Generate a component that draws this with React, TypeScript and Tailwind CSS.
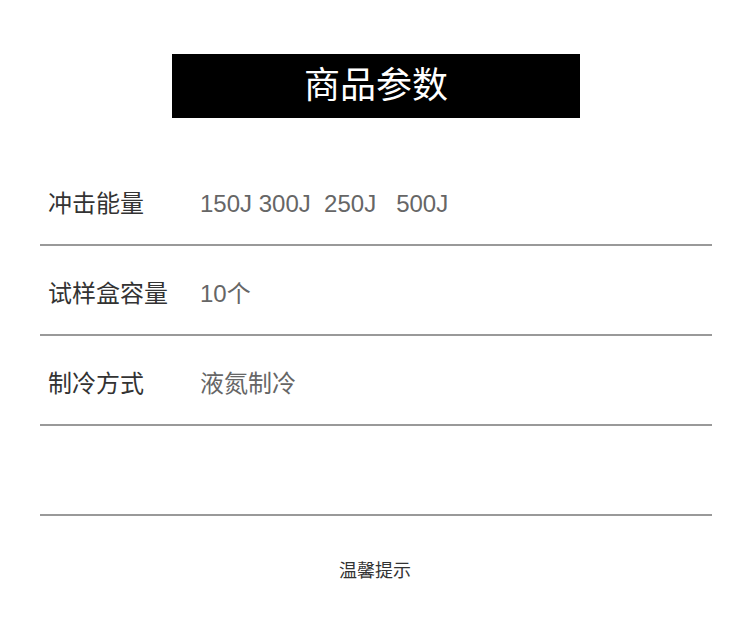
import React from 'react';

const rows = [
  { label: '冲击能量', value: '150J 300J\u00a0\u00a0250J\u00a0\u00a0\u00a0500J' },
  { label: '试样盒容量', value: '10个' },
  { label: '制冷方式', value: '液氮制冷' },
  { label: '', value: '' },
];

export default function App() {
  return (
    <div
      className="w-[750px] h-[630px] bg-white"
      style={{ fontFamily: '"Liberation Sans", "Noto Sans CJK SC", sans-serif' }}
    >
      {/* 标题 */}
      <div className="pt-[54px] pl-[172px]">
        <div className="w-[408px] h-[64px] bg-black flex items-center justify-center text-white text-[36px]">
          商品参数
        </div>
      </div>

      {/* 参数表 */}
      <div className="ml-[40px] w-[672px] mt-[38px]">
        {rows.map((row, i) => (
          <div key={i} className="h-[90px] flex items-center border-b-2 border-[#999] text-[24px] pt-[7px]">
            <div className="w-[160px] pl-[8px] text-[#333]">{row.label}</div>
            <div className="text-[#666] whitespace-pre">{row.value}</div>
          </div>
        ))}
      </div>

      {/* 温馨提示 */}
      <div className="mt-[42px] text-center text-[18px] text-[#333]">温馨提示</div>
    </div>
  );
}
